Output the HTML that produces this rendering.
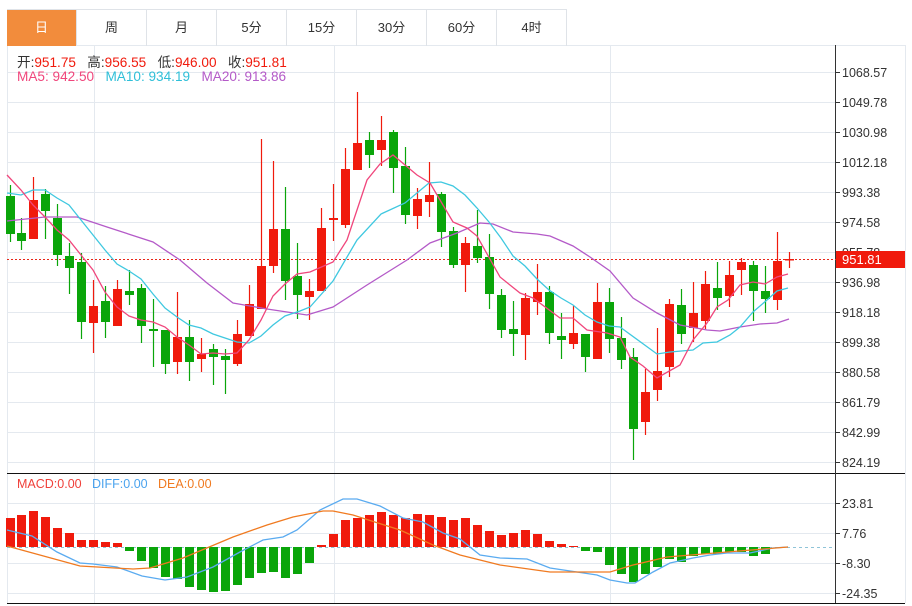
<!DOCTYPE html>
<html><head><meta charset="utf-8"><style>
body{margin:0;background:#fff;width:912px;height:606px;overflow:hidden;font-family:"Liberation Sans","Noto Sans CJK SC",sans-serif}
.tabs{position:absolute;left:7px;top:9px;height:36px;display:flex;border-top:1px solid #dfe3e8}
.tab{width:69px;border-right:1px solid #dfe3e8;height:36px;line-height:36px;text-align:center;font-size:13px;color:#333}
.tab.a{background:#f28c3c;color:#fff}
.lg{position:absolute;left:17px;font-size:13.6px;white-space:nowrap}
</style></head><body>
<svg width="912" height="606" style="position:absolute;left:0;top:0">
<g stroke="#e4e9ef" stroke-width="1">
<line x1="7" y1="72.5" x2="835" y2="72.5"/><line x1="7" y1="102.5" x2="835" y2="102.5"/><line x1="7" y1="132.5" x2="835" y2="132.5"/><line x1="7" y1="162.5" x2="835" y2="162.5"/><line x1="7" y1="192.5" x2="835" y2="192.5"/><line x1="7" y1="222.5" x2="835" y2="222.5"/><line x1="7" y1="252.5" x2="835" y2="252.5"/><line x1="7" y1="282.5" x2="835" y2="282.5"/><line x1="7" y1="312.5" x2="835" y2="312.5"/><line x1="7" y1="342.5" x2="835" y2="342.5"/><line x1="7" y1="372.5" x2="835" y2="372.5"/><line x1="7" y1="402.5" x2="835" y2="402.5"/><line x1="7" y1="432.5" x2="835" y2="432.5"/><line x1="7" y1="462.5" x2="835" y2="462.5"/>
<line x1="7" y1="503.5" x2="835" y2="503.5"/><line x1="7" y1="533.5" x2="835" y2="533.5"/><line x1="7" y1="563.5" x2="835" y2="563.5"/><line x1="7" y1="593.5" x2="835" y2="593.5"/>
<line x1="94.5" y1="45" x2="94.5" y2="603"/><line x1="334.5" y1="45" x2="334.5" y2="603"/><line x1="610.5" y1="45" x2="610.5" y2="603"/>
<line x1="7.5" y1="45" x2="7.5" y2="603"/><line x1="7" y1="45.5" x2="905" y2="45.5"/><line x1="905.5" y1="45" x2="905.5" y2="603"/>
</g>
<line x1="7" y1="473.5" x2="905" y2="473.5" stroke="#111"/>
<line x1="7" y1="603.5" x2="905" y2="603.5" stroke="#111"/>
<line x1="835.5" y1="45" x2="835.5" y2="603" stroke="#333"/>
<g stroke="#333"><line x1="835" y1="72.5" x2="840" y2="72.5"/><line x1="835" y1="102.5" x2="840" y2="102.5"/><line x1="835" y1="132.5" x2="840" y2="132.5"/><line x1="835" y1="162.5" x2="840" y2="162.5"/><line x1="835" y1="192.5" x2="840" y2="192.5"/><line x1="835" y1="222.5" x2="840" y2="222.5"/><line x1="835" y1="282.5" x2="840" y2="282.5"/><line x1="835" y1="312.5" x2="840" y2="312.5"/><line x1="835" y1="342.5" x2="840" y2="342.5"/><line x1="835" y1="372.5" x2="840" y2="372.5"/><line x1="835" y1="402.5" x2="840" y2="402.5"/><line x1="835" y1="432.5" x2="840" y2="432.5"/><line x1="835" y1="462.5" x2="840" y2="462.5"/><line x1="835" y1="503.5" x2="840" y2="503.5"/><line x1="835" y1="533.5" x2="840" y2="533.5"/><line x1="835" y1="563.5" x2="840" y2="563.5"/><line x1="835" y1="593.5" x2="840" y2="593.5"/></g>
<g font-family="Liberation Sans,sans-serif" font-size="12.5" fill="#333">
<text x="842" y="77">1068.57</text><text x="842" y="107">1049.78</text><text x="842" y="137">1030.98</text><text x="842" y="167">1012.18</text><text x="842" y="197">993.38</text><text x="842" y="227">974.58</text><text x="842" y="257">955.78</text><text x="842" y="287">936.98</text><text x="842" y="317">918.18</text><text x="842" y="347">899.38</text><text x="842" y="377">880.58</text><text x="842" y="407">861.79</text><text x="842" y="437">842.99</text><text x="842" y="467">824.19</text>
<text x="842" y="508">23.81</text><text x="842" y="538">7.76</text><text x="842" y="568">-8.30</text><text x="842" y="598">-24.35</text>
</g>
<line x1="7" y1="259.5" x2="836" y2="259.5" stroke="#e8261a" stroke-dasharray="2,2"/>
<rect x="836" y="251" width="69" height="17" fill="#f01a0c"/>
<text x="842" y="264" font-family="Liberation Sans,sans-serif" font-size="13" fill="#fff">951.81</text>
<g id="c"></g>
<g fill="none" stroke-width="1.3">
<polyline stroke="#b45ac8" points="7,221 45,217 77,217 107,227 153,242 180,260 207,283 233,303 267,309 307,315 333,307 367,285 383,275 407,260 430,243 457,233 480,223 493,224 513,232 537,234 550,236 573,246 590,257 610,271 633,298 657,313 680,325 707,330 720,331 740,327 760,324 777,323 789,319"/>
<polyline stroke="#3fc8e0" points="7,193 21,195 33,190 45,190 57,198 69,205 81,220 93,235 105,250 117,264 129,271 141,279 153,294 165,308 177,317 189,325 201,328 213,334 225,338 237,342 249,343 261,336 273,325 285,316 300,311 310,307 333,281 357,240 381,214 405,203 429,183 441,182 453,186 465,195 477,208 489,222 501,238 513,256 525,266 537,279 549,290 561,298 573,305 585,315 597,322 609,326 620,327 657,354 670,352 693,350 703,343 717,342 730,335 740,327 753,312 767,300 777,291 788,288"/>
<polyline stroke="#f0467c" points="7,175 21,190 33,205 45,217 57,230 69,240 81,255 93,270 105,292 117,307 129,316 141,320 153,322 165,327 177,337 189,345 201,354 213,353 225,354 237,353 249,340 261,320 273,296 285,284 297,274 310,272 333,262 347,240 367,180 380,164 393,155 417,175 430,183 453,222 467,228 477,236 500,277 520,293 533,298 560,318 573,318 587,330 607,333 620,337 630,357 643,366 657,378 680,365 693,340 707,323 717,307 728,300 740,285 753,282 765,284 777,277 788,274"/>
</g>
<line x1="7" y1="547.5" x2="835" y2="547.5" stroke="#8fc4d8" stroke-dasharray="3,3"/>
<g id="m"></g>
<g fill="none" stroke-width="1.3">
<polyline stroke="#5aabf0" points="7,530 32,536 57,552 80,563 93,564 117,567 142,576 165,580 187,577 213,567 240,552 263,540 283,537 297,530 320,510 343,499 357,499 380,506 403,518 423,522 443,533 460,539 480,555 500,558 527,559 550,568 597,575 610,580 627,583 635,583 653,572 670,563 693,558 710,555 727,553 750,553 773,548 788,547"/>
<polyline stroke="#f07a20" points="7,546 80,566 133,569 150,568 183,558 233,537 267,525 293,517 323,511 333,511 353,515 400,530 433,545 460,555 500,565 550,572 610,572 633,565 667,557 727,552 788,547"/>
</g>
</svg>
<div class="tabs"><div class="tab a">日</div><div class="tab">周</div><div class="tab">月</div><div class="tab">5分</div><div class="tab">15分</div><div class="tab">30分</div><div class="tab">60分</div><div class="tab">4时</div></div>
<div class="lg" style="top:51px;color:#333">开:<span style="color:#f01a0c">951.75</span>&nbsp;&nbsp;&nbsp;高:<span style="color:#f01a0c">956.55</span>&nbsp;&nbsp;&nbsp;低:<span style="color:#f01a0c">946.00</span>&nbsp;&nbsp;&nbsp;收:<span style="color:#f01a0c">951.81</span></div>
<div class="lg" style="top:69px"><span style="color:#f0467c">MA5: 942.50</span>&nbsp;&nbsp;&nbsp;<span style="color:#2fbfd8">MA10: 934.19</span>&nbsp;&nbsp;&nbsp;<span style="color:#b45ac8">MA20: 913.86</span></div>
<div class="lg" style="top:477px;font-size:12.5px"><span style="color:#f0403a">MACD:0.00</span>&nbsp;&nbsp;&nbsp;<span style="color:#4aa3ee">DIFF:0.00</span>&nbsp;&nbsp;&nbsp;<span style="color:#f07a20">DEA:0.00</span></div>
<script>
var C=[[10,'g',196,234,185,242],[21,'g',233,241,218,250],[33,'r',200,239,177,239],[45,'g',194,211,189,239],[57,'g',218,255,204,266],[69,'g',256,268,243,294],[81,'g',262,322,253,339],[93,'r',306,323,280,353],[105,'g',301,322,286,338],[117,'r',289,326,280,326],[129,'g',291,295,270,305],[141,'g',288,326,284,343],[153,'g',329,331,299,367],[165,'g',330,364,330,374],[177,'r',337,362,292,374],[189,'g',337,362,320,381],[201,'r',354,359,338,372],[213,'g',349,357,344,385],[225,'g',356,360,349,394],[237,'r',334,364,320,366],[249,'r',304,336,285,336],[261,'r',266,309,139,309],[273,'r',229,266,161,273],[285,'g',229,281,187,300],[297,'g',276,295,243,319],[309,'r',291,297,279,320],[321,'r',228,291,208,291],[333,'r',218,220,184,241],[345,'r',169,225,148,228],[357,'r',143,170,92,170],[369,'g',140,155,132,168],[381,'r',140,150,116,166],[393,'g',132,168,130,193],[405,'g',166,215,147,224],[417,'r',199,216,188,229],[429,'r',195,202,162,217],[441,'g',194,232,192,247],[453,'g',231,265,227,268],[465,'r',243,265,237,292],[477,'g',246,258,210,263],[489,'g',257,294,234,309],[501,'g',295,330,289,338],[513,'g',329,334,301,356],[525,'r',298,335,293,360],[537,'r',292,302,264,315],[549,'g',292,333,286,344],[561,'g',336,340,313,359],[573,'r',333,344,306,349],[585,'g',334,357,334,372],[597,'r',302,359,283,359],[609,'g',302,339,288,353],[621,'g',338,360,317,369],[633,'g',357,429,348,460],[645,'r',392,422,369,435],[657,'r',371,390,328,401],[669,'r',304,367,299,377],[681,'g',305,334,289,344],[693,'r',313,328,282,342],[705,'r',284,321,271,329],[717,'g',288,298,262,310],[729,'r',275,296,261,307],[741,'r',262,270,258,295],[753,'g',265,291,261,321],[765,'g',291,299,266,313],[777,'r',261,300,232,310],[789,'r',259,260,252,268]];
var s='';C.forEach(function(c){var col=c[1]=='r'?'#f01a0c':'#0aa50a';s+='<line x1="'+(c[0]+.5)+'" y1="'+c[4]+'" x2="'+(c[0]+.5)+'" y2="'+c[5]+'" stroke="'+col+'" stroke-width="1.2"/><rect x="'+(c[0]-4)+'" y="'+c[2]+'" width="9" height="'+Math.max(1.5,c[3]-c[2])+'" fill="'+col+'"/>';});
document.getElementById('c').innerHTML=s;
var M=[[10,518],[21,515],[33,511],[45,517],[57,528],[69,533],[81,540],[93,540],[105,542],[117,543],[129,551],[141,561],[153,568],[165,577],[177,579],[189,587],[201,590],[213,592],[225,591],[237,585],[249,578],[261,573],[273,572],[285,578],[297,574],[309,563],[321,545],[333,534],[345,520],[357,518],[369,515],[381,512],[393,515],[405,518],[417,514],[429,515],[441,517],[453,520],[465,518],[477,525],[489,531],[501,535],[513,533],[525,530],[537,534],[549,541],[561,544],[573,546],[585,551],[597,552],[609,565],[621,574],[633,582],[645,574],[657,567],[669,559],[681,562],[693,556],[705,554],[717,554],[729,552],[741,552],[753,556],[765,554]];
var t='';M.forEach(function(m){var y0=547,up=m[1]<y0;t+='<rect x="'+(m[0]-4)+'" y="'+(up?m[1]:y0)+'" width="9" height="'+Math.abs(m[1]-y0)+'" fill="'+(up?'#f01a0c':'#0aa50a')+'"/>';});
document.getElementById('m').innerHTML=t;
</script>
</body></html>
